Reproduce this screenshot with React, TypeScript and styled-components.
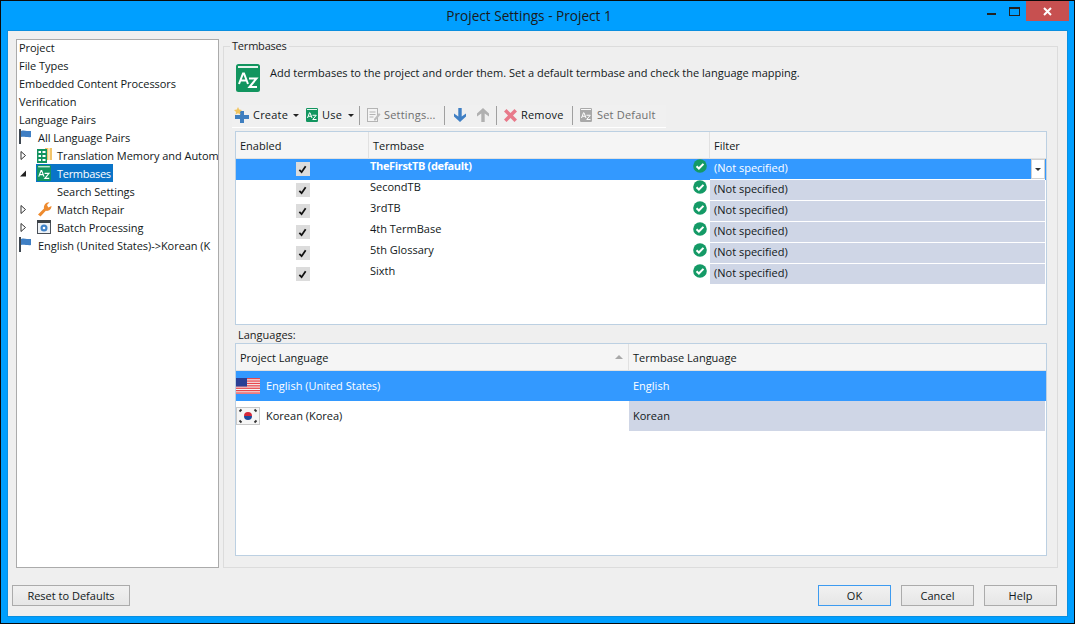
import React from 'react';
import styled, { createGlobalStyle } from 'styled-components';

const Global = createGlobalStyle`
  html, body { margin: 0; padding: 0; background: #009fff; }
  body { font-family: "Open Sans", "Liberation Sans", sans-serif; font-size: 11px; color: #111820; }
  * { box-sizing: border-box; }
`;

const Win = styled.div`
  width: 1075px;
  height: 624px;
  background: #009fff;
  border: 1px solid #0a0a0a;
  display: flex;
  flex-direction: column;
  overflow: hidden;
`;

const TitleBar = styled.div`
  height: 30px;
  flex: none;
  display: flex;
  align-items: flex-start;
`;

const Title = styled.div`
  flex: 1;
  text-align: center;
  padding-left: 76px;
  padding-top: 5px;
  font-size: 13.6px;
  line-height: 20px;
  color: #1a1a1a;
`;

const Controls = styled.div`
  width: 93px;
  flex: none;
  display: flex;
  align-items: flex-start;
  padding-right: 5px;
`;

const CtlBtn = styled.div<{ $w: number; $close?: boolean }>`
  width: ${p => p.$w}px;
  height: 20px;
  display: flex;
  align-items: center;
  justify-content: center;
  background: ${p => (p.$close ? '#c75050' : 'transparent')};
`;

const Body = styled.div`
  flex: 1;
  margin: 0 7px 7px;
  background: #efefef;
  box-shadow: 0 0 0 1px #0a8fe0;
  display: flex;
  flex-direction: column;
  min-height: 0;
`;

const Main = styled.div`
  height: 537px;
  flex: none;
  padding: 8px 9px 0 8px;
  display: flex;
  gap: 4px;
`;

const Tree = styled.div`
  width: 203px;
  height: 529px;
  flex: none;
  background: #fff;
  border: 1px solid #ababab;
  overflow: hidden;
  letter-spacing: -0.05px;
  & > :first-child { margin-top: -2px; }
`;

const TreeRow = styled.div<{ $indent: number }>`
  height: 18px;
  display: flex;
  align-items: center;
  padding-left: ${p => p.$indent}px;
  white-space: nowrap;
`;

const Expander = styled.span`
  width: 18px;
  flex: none;
  display: flex;
  align-items: center;
  padding-left: 1px;
`;

const TreeIcon = styled.span<{ $wide?: boolean }>`
  width: ${p => (p.$wide ? 20 : 19)}px;
  height: 18px;
  flex: none;
  display: flex;
  align-items: center;
`;

const TreeLabel = styled.span`
  display: flex;
  align-items: center;
  height: 18px;
  padding-right: 2px;
  letter-spacing: -0.3px;
  color: #fff;
`;

const Selected = styled.span`
  display: flex;
  align-items: center;
  height: 18px;
  background: #0a74c8;
  padding-left: 1px;
  margin-left: -1px;
`;

const Group = styled.fieldset`
  flex: 1;
  min-width: 0;
  margin: 0;
  height: 529px;
  border: 1px solid #dcdcdc;
  padding: 0 10px 10px 11px;
  display: flex;
  flex-direction: column;
`;

const Legend = styled.legend`
  margin-left: -5px;
  padding: 0 2px;
  line-height: 14px;
  letter-spacing: -0.2px;
  color: #222;
`;

const Hint = styled.div`
  margin-top: 11px;
  margin-left: 1px;
  height: 29px;
  display: flex;
  align-items: flex-start;
  gap: 10px;
  span { margin-top: 1px; line-height: 16px; }
`;

const Toolbar = styled.div`
  margin: 12px 0 3px -3px;
  width: 434px;
  height: 23px;
  flex: none;
  border-bottom: 1px solid #fff;
  display: flex;
  align-items: center;
  padding: 0 0 2px 2px;
  background: #f0f0f0;
  letter-spacing: 0.2px;
`;

const Tool = styled.div<{ $off?: boolean; $w: number; $gap?: number }>`
  width: ${p => p.$w}px;
  flex: none;
  display: flex;
  align-items: center;
  gap: ${p => p.$gap ?? 4}px;
  white-space: nowrap;
  line-height: 12px;
  color: ${p => (p.$off ? '#6f6f6f' : 'inherit')};
`;

const Caret = styled.span`
  margin-left: 2px;
  width: 0;
  height: 0;
  border-left: 3px solid transparent;
  border-right: 3px solid transparent;
  border-top: 3px solid #222;
`;

const Sep = styled.div<{ $after: number }>`
  width: 1px;
  height: 19px;
  flex: none;
  background: #a0a0a0;
  margin-right: ${p => p.$after}px;
`;

const Grid = styled.div<{ $h: number }>`
  height: ${p => p.$h}px;
  flex: none;
  background: #fff;
  border: 1px solid #bcd0e2;
  overflow: hidden;
`;

const Head = styled.div`
  height: 27px;
  display: flex;
  background: #f5f5f5;
  border-bottom: 1px solid #e1e1e1;
`;

const HeadCell = styled.div<{ $w: number | string }>`
  width: ${p => (typeof p.$w === 'number' ? `${p.$w}px` : p.$w)};
  flex: ${p => (typeof p.$w === 'number' ? 'none' : 1)};
  display: flex;
  align-items: center;
  justify-content: space-between;
  padding: 0 4px 0;
  border-right: 1px solid #e1e1e1;
  &:last-child { border-right: none; }
`;

const SortMark = styled.span`
  width: 0;
  height: 0;
  margin-right: 1px;
  border-left: 4px solid transparent;
  border-right: 4px solid transparent;
  border-bottom: 4px solid #a8a8a8;
`;

const Row = styled.div<{ $on?: boolean }>`
  height: 21px;
  display: flex;
  background: ${p => (p.$on ? '#3399ff' : '#fff')};
  color: ${p => (p.$on ? '#fff' : 'inherit')};
`;

const CheckCell = styled.div`
  width: 132px;
  flex: none;
  display: flex;
  align-items: center;
  justify-content: center;
  padding: 0 0 1px 1px;
`;

const Box = styled.div`
  width: 14px;
  height: 14px;
  background: #dcdcdc;
  display: flex;
  align-items: center;
  justify-content: center;
`;

const NameCell = styled.div<{ $on?: boolean }>`
  width: 342px;
  flex: none;
  display: flex;
  justify-content: space-between;
  padding: 0 3px 0 2px;
  line-height: 14px;
  font-weight: ${p => (p.$on ? 700 : 400)};
  letter-spacing: ${p => (p.$on ? '-0.35px' : 0)};
`;

const FilterCell = styled.div<{ $on?: boolean }>`
  flex: 1;
  margin-right: 1px;
  display: flex;
  align-items: center;
  justify-content: space-between;
  padding: 0 0 3px 4px;
  background: ${p => (p.$on ? 'transparent' : '#cfd6e6')};
  border-bottom: 1px solid #fff;
`;

const Drop = styled.div`
  width: 14px;
  height: 20px;
  margin-bottom: -3px;
  background: #fff;
  border: 1px solid #d0d0d0;
  display: flex;
  align-items: center;
  justify-content: center;
  span {
    width: 0;
    height: 0;
    border-left: 3px solid transparent;
    border-right: 3px solid transparent;
    border-top: 3px solid #333;
  }
`;

const LangLabel = styled.div`
  height: 18px;
  flex: none;
  padding: 2px 0 0 3px;
  line-height: 16px;
  color: #222;
`;

const LangRow = styled.div<{ $on?: boolean }>`
  height: 30px;
  display: flex;
  background: ${p => (p.$on ? '#3399ff' : '#fff')};
  color: ${p => (p.$on ? '#fff' : 'inherit')};
`;

const LangName = styled.div`
  width: 393px;
  flex: none;
  display: flex;
  align-items: center;
  gap: 6px;
  span { margin-top: -2px; }
`;

const LangTarget = styled.div<{ $on?: boolean }>`
  flex: 1;
  margin-right: 1px;
  display: flex;
  align-items: center;
  padding: 0 0 2px 4px;
  background: ${p => (p.$on ? 'transparent' : '#cfd6e6')};
`;

const Footer = styled.div`
  flex: 1;
  display: flex;
  align-items: flex-start;
  padding: 17px 10px 0 4px;
  gap: 10px;
`;

const Btn = styled.div<{ $w: number; $focus?: boolean; $push?: boolean }>`
  width: ${p => p.$w}px;
  height: 21px;
  display: flex;
  align-items: center;
  justify-content: center;
  border: 1px solid ${p => (p.$focus ? '#3d9bf0' : '#ababab')};
  background: linear-gradient(#f1f1f1, #e6e6e6);
  margin-left: ${p => (p.$push ? 'auto' : 0)};
`;

/* ---- drawings ---- */

const FlagIcon = () => (
  <svg width="13" height="16" viewBox="0 0 13 16">
    <rect x="0" y="0" width="2" height="15" fill="#3d4650" />
    <path d="M2 2c3-1 4 0 6 0s3 0 4 0v6c-2 .5-3 0-5 0s-3-.5-5 0z" fill="#3f7fc4" />
  </svg>
);

const TmIcon = () => (
  <svg width="15" height="15" viewBox="0 0 15 15">
    <rect x="8" y="0" width="7" height="12" fill="#f2c46a" />
    <rect x="11" y="0" width="2" height="12" fill="#fbe6b8" />
    <rect x="0" y="1" width="10" height="14" fill="#12925e" />
    <path d="M1.500 3h2.500v2h-2.500zM5.500 3h3v2h-3zM1.500 7h2.500v2h-2.500zM5.500 7h3v2h-3zM1.500 11h2.500v2h-2.500zM5.500 11h3v2h-3z" fill="#fff" />
  </svg>
);

const AzIcon = ({ size = 14, gray }: { size?: number; gray?: boolean }) => {
  const c = gray ? '#a9a9a9' : '#12955f';
  return (
    <svg width={size} height={(size * 28) / 24} viewBox="0 0 24 28">
      <rect x="0" y="0" width="24" height="28" rx="2.500" fill={c} />
      <rect x="2" y="2" width="20" height="2" fill="#fff" opacity="0.9" />
      <path d="M3 20 7 9.500h1l4 10.500M4.600 16.500h6.300" fill="none" stroke="#fff" strokeWidth="2" />
      <path d="M13 14.500h7.500l-7 8.500h7.500" fill="none" stroke="#fff" strokeWidth="2" />
    </svg>
  );
};

const WrenchIcon = () => (
  <svg width="15" height="16" viewBox="0 0 15 16">
    <path d="M1 13.500 7 7.500C6.500 4.500 8.500 1 12.500 1.200L10 4l1.300 2.400L14.500 5C14.500 8.500 11.500 10.500 8.800 9.800L3.500 15.500z" fill="#ee8b2f" />
  </svg>
);

const BatchIcon = () => (
  <svg width="14" height="14" viewBox="0 0 14 14">
    <rect x="0.500" y="0.500" width="13" height="13" fill="#eef2f6" stroke="#4a5058" />
    <rect x="0" y="0" width="14" height="3" fill="#3c4248" />
    <circle cx="7" cy="8" r="3.500" fill="#3f82c8" />
    <circle cx="7" cy="8" r="1.300" fill="#fff" />
  </svg>
);

const PlusIcon = () => (
  <svg width="16" height="16" viewBox="0 0 16 16">
    <path d="M6 4h4v4h5v4h-5v4H6v-4H1V8h5z" fill="#3f7fc0" />
    <path d="M4 0l1.200 2.500L8 3 6 5l.5 2.500L4 6.300 1.500 7.500 2 5 0 3l2.800-.5z" fill="#f2c560" />
  </svg>
);

const SettingsIcon = () => (
  <svg width="14" height="14" viewBox="0 0 14 14">
    <rect x="0.500" y="0.500" width="10" height="13" fill="#f4f4f4" stroke="#b4b4b4" />
    <path d="M2.500 4h6M2.500 6.500h6M2.500 9h4" stroke="#b4b4b4" />
    <path d="M7 11l5-6 1.500 1.500-5 6H7z" fill="#bdbdbd" />
  </svg>
);

const ArrowIcon = ({ up, color }: { up?: boolean; color: string }) => (
  <svg width="12" height="14" viewBox="0 0 12 14" style={{ transform: up ? 'rotate(180deg)' : undefined }}>
    <path d="M4.300 0h3.400v8.500L12 5.500V8.500L6 14 0 8.500V5.500l4.300 3z" fill={color} />
  </svg>
);

const RemoveIcon = () => (
  <svg width="13" height="13" viewBox="0 0 13 13">
    <path d="M2.500 0 6.500 4 10.500 0 13 2.500 9 6.500 13 10.500 10.500 13 6.500 9 2.500 13 0 10.500 4 6.500 0 2.500z" fill="#e8798a" />
  </svg>
);

const CheckMark = () => (
  <svg width="9" height="9" viewBox="0 0 10 10">
    <path d="M1.500 5.500 4 8 8.500 1.500" fill="none" stroke="#111" strokeWidth="2" />
  </svg>
);

const OkIcon = () => (
  <svg width="14" height="14" viewBox="0 0 15 15">
    <circle cx="7.500" cy="7.500" r="7.300" fill="#149a66" />
    <path d="M3.800 7.800 6.300 10.200 11.200 5.200" fill="none" stroke="#fff" strokeWidth="2.200" />
  </svg>
);

const UsFlag = () => (
  <svg width="24" height="16" viewBox="0 0 24 16">
    <rect width="24" height="16" fill="#f4f4f4" />
    {[0, 2.4, 4.8, 7.2, 9.600, 12, 14.400].map(y => (
      <rect key={y} y={y} width="24" height="1.300" fill="#e8474c" />
    ))}
    <rect width="11" height="8.500" fill="#2a3f95" />
  </svg>
);

const KrFlag = () => (
  <svg width="24" height="18" viewBox="0 0 24 18">
    <rect x="0.500" y="0.500" width="23" height="17" fill="#f6f6f6" stroke="#c8c8c8" />
    <path d="M8 9a4 4 0 0 1 8 0z" fill="#d5283a" />
    <path d="M8 9a4 4 0 0 0 8 0z" fill="#1d4a9e" />
    <path d="M3.500 4.500l2-2M18.500 2.500l2 2M3.500 13.500l2 2M18.500 15.500l2-2" stroke="#333" strokeWidth="1.800" />
  </svg>
);

const termbases = ['TheFirstTB (default)', 'SecondTB', '3rdTB', '4th TermBase', '5th Glossary', 'Sixth'];

const Triangle = ({ open }: { open?: boolean }) => (
  <svg width="7" height="9" viewBox="0 0 7 9">
    {open ? (
      <path d="M0 7.500 6 1.500V7.500z" fill="#222" />
    ) : (
      <path d="M1 .5 5.500 4.500 1 8.500z" fill="#fff" stroke="#333" />
    )}
  </svg>
);

export default function App() {
  return (
    <Win>
      <Global />
      <TitleBar>
        <Title>Project Settings - Project 1</Title>
        <Controls>
          <CtlBtn $w={22}>
            <svg width="9" height="9" viewBox="0 0 9 9"><rect y="6" width="9" height="2" fill="#222" /></svg>
          </CtlBtn>
          <CtlBtn $w={26}>
            <svg width="11" height="9" viewBox="0 0 11 9"><rect x="0.500" y="0.500" width="10" height="8" fill="none" stroke="#222" /><rect width="11" height="2" fill="#222" /></svg>
          </CtlBtn>
          <CtlBtn $w={45} $close>
            <svg width="9" height="9" viewBox="0 0 9 9"><path d="M1 1l7 7M8 1 1 8" stroke="#fff" strokeWidth="2" /></svg>
          </CtlBtn>
        </Controls>
      </TitleBar>
      <Body>
        <Main>
          <Tree>
            <TreeRow $indent={2}>Project</TreeRow>
            <TreeRow $indent={2}>File Types</TreeRow>
            <TreeRow $indent={2}>Embedded Content Processors</TreeRow>
            <TreeRow $indent={2}>Verification</TreeRow>
            <TreeRow $indent={2}>Language Pairs</TreeRow>
            <TreeRow $indent={2}><TreeIcon><FlagIcon /></TreeIcon>All Language Pairs</TreeRow>
            <TreeRow $indent={2}><Expander><Triangle /></Expander><TreeIcon $wide><TmIcon /></TreeIcon>Translation Memory and Autom</TreeRow>
            <TreeRow $indent={2}>
              <Expander><Triangle open /></Expander>
              <Selected>
                <TreeIcon $wide><AzIcon /></TreeIcon>
                <TreeLabel>Termbases</TreeLabel>
              </Selected>
            </TreeRow>
            <TreeRow $indent={40}>Search Settings</TreeRow>
            <TreeRow $indent={2}><Expander><Triangle /></Expander><TreeIcon $wide><WrenchIcon /></TreeIcon>Match Repair</TreeRow>
            <TreeRow $indent={2}><Expander><Triangle /></Expander><TreeIcon $wide><BatchIcon /></TreeIcon>Batch Processing</TreeRow>
            <TreeRow $indent={2}><TreeIcon><FlagIcon /></TreeIcon>English (United States)-&gt;Korean (K</TreeRow>
          </Tree>
          <Group>
            <Legend>Termbases</Legend>
            <Hint>
              <AzIcon size={24} />
              <span>Add termbases to the project and order them. Set a default termbase and check the language mapping.</span>
            </Hint>
            <Toolbar>
              <Tool $w={72} $gap={3}><PlusIcon />Create<Caret /></Tool>
              <Tool $w={53}><AzIcon size={12} />Use<Caret /></Tool>
              <Sep $after={7} />
              <Tool $off $w={77} $gap={3}><SettingsIcon />Settings...</Tool>
              <Sep $after={9} />
              <Tool $w={23}><ArrowIcon color="#3f7fc4" /></Tool>
              <Tool $w={19}><ArrowIcon up color="#b0b0b0" /></Tool>
              <Sep $after={7} />
              <Tool $w={68}><RemoveIcon />Remove</Tool>
              <Sep $after={7} />
              <Tool $off $w={80} $gap={5}><AzIcon size={12} gray />Set Default</Tool>
            </Toolbar>
            <Grid $h={194}>
              <Head>
                <HeadCell $w={133}>Enabled</HeadCell>
                <HeadCell $w={341}>Termbase</HeadCell>
                <HeadCell $w="auto">Filter</HeadCell>
              </Head>
              {termbases.map((name, i) => (
                <Row key={name} $on={i === 0}>
                  <CheckCell><Box><CheckMark /></Box></CheckCell>
                  <NameCell $on={i === 0}>{name}<OkIcon /></NameCell>
                  <FilterCell $on={i === 0}>
                    (Not specified)
                    {i === 0 && <Drop><span /></Drop>}
                  </FilterCell>
                </Row>
              ))}
            </Grid>
            <LangLabel>Languages:</LangLabel>
            <Grid $h={213}>
              <Head>
                <HeadCell $w={393}>Project Language<SortMark /></HeadCell>
                <HeadCell $w="auto">Termbase Language</HeadCell>
              </Head>
              <LangRow $on>
                <LangName><UsFlag /><span>English (United States)</span></LangName>
                <LangTarget $on>English</LangTarget>
              </LangRow>
              <LangRow>
                <LangName><KrFlag /><span>Korean (Korea)</span></LangName>
                <LangTarget>Korean</LangTarget>
              </LangRow>
            </Grid>
          </Group>
        </Main>
        <Footer>
          <Btn $w={118}>Reset to Defaults</Btn>
          <Btn $w={73} $focus $push>OK</Btn>
          <Btn $w={73}>Cancel</Btn>
          <Btn $w={73}>Help</Btn>
        </Footer>
      </Body>
    </Win>
  );
}
